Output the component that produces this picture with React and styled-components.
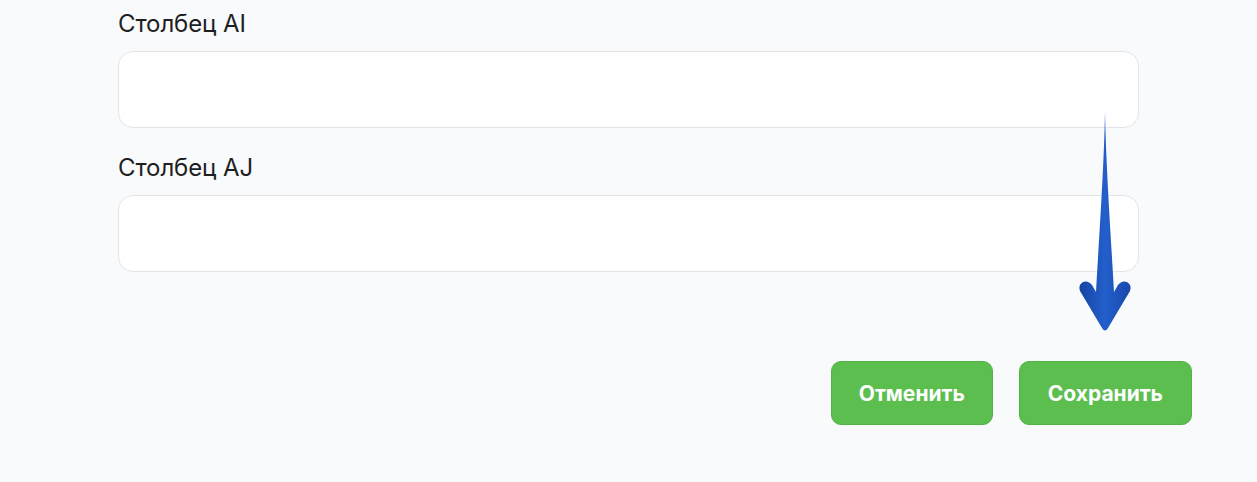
import React from "react";
import styled, { createGlobalStyle } from "styled-components";

const GlobalStyle = createGlobalStyle`
  html, body {
    margin: 0;
    padding: 0;
    background: #f9fafc;
  }
  body {
    font-family: Inter, "Noto Sans", "Liberation Sans", sans-serif;
    color: #1e1f21;
  }
`;

const Page = styled.div`
  position: relative;
  width: 1257px;
  height: 482px;
  box-sizing: border-box;
  padding: 9px 65px 0 118px;
  overflow: hidden;
`;

const Fields = styled.div`
  width: 1021px;
  display: flex;
  flex-direction: column;
  gap: 25px;
`;

const Field = styled.label`
  display: flex;
  flex-direction: column;
  gap: 12px;
`;

const Label = styled.span`
  font-size: 24px;
  line-height: 30px;
  font-weight: 400;
  letter-spacing: -0.1px;
`;

const Input = styled.input`
  box-sizing: border-box;
  height: 77px;
  width: 100%;
  border: 1px solid #e2e4e8;
  border-radius: 15px;
  background: #ffffff;
  font: inherit;
  font-size: 20px;
  padding: 0 20px;
  outline: none;
`;

const Actions = styled.div`
  display: flex;
  justify-content: flex-end;
  gap: 26px;
  margin-top: 89px;
`;

const Button = styled.button`
  box-sizing: border-box;
  height: 64px;
  padding: 0 ${(p) => p.$pad}px;
  border: 1px solid #51b345;
  border-radius: 10px;
  background: #5bbe4f;
  color: #ffffff;
  font-family: Inter, "Noto Sans", "Liberation Sans", sans-serif;
  font-size: 21px;
  font-weight: 700;
  cursor: pointer;
`;

const ArrowMark = styled.svg`
  position: absolute;
  left: 1078px;
  top: 108px;
  width: 56px;
  height: 228px;
`;

function Arrow() {
  return (
    <ArrowMark viewBox="0 0 56 228">
      <defs>
        <linearGradient id="arrowFill" x1="0" y1="0" x2="1" y2="0">
          <stop offset="0" stopColor="#1645a3" />
          <stop offset="0.5" stopColor="#235fcb" />
          <stop offset="1" stopColor="#1848ab" />
        </linearGradient>
      </defs>
      <path
        fill="url(#arrowFill)"
        d="M27 4 C28 60 33 130 36 184 L40 177 Q44 172 49 174 Q54 177 52 183 L30 220 Q27 225 24 220 L2 183 Q0 177 5 174 Q10 172 14 177 L18 184 C21 130 26 60 27 4 Z"
      />
    </ArrowMark>
  );
}

export default function App() {
  return (
    <>
      <GlobalStyle />
      <Page>
        <Fields>
          <Field>
            <Label>Столбец AI</Label>
            <Input type="text" />
          </Field>
          <Field>
            <Label>Столбец AJ</Label>
            <Input type="text" />
          </Field>
        </Fields>
        <Actions>
          <Button $pad={27}>Отменить</Button>
          <Button $pad={28}>Сохранить</Button>
        </Actions>
        <Arrow />
      </Page>
    </>
  );
}
